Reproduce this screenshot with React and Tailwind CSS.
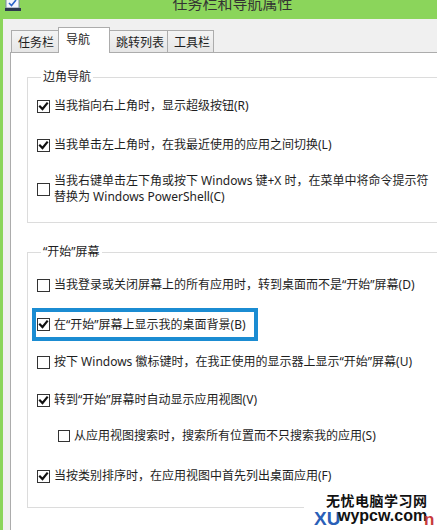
import React from 'react';

const FONT = { fontFamily: '"Noto Sans", "Noto Sans CJK SC", sans-serif' };

function Check({ checked, small }) {
  return (
    <span className={`flex-shrink-0 bg-white border border-[#333] flex items-center justify-center ${small ? 'w-[12px] h-[12px]' : 'w-[13px] h-[13px]'}`}>
      {checked && (
        <svg width="11" height="11" viewBox="0 0 11 11" fill="none" stroke="#111" strokeWidth="2.2" strokeLinecap="square">
          <path d="M2 5.5 L4.5 8 L9 2.5" />
        </svg>
      )}
    </span>
  );
}

function Row({ checked, className = '', children, small }) {
  return (
    <div className={`flex items-center gap-[4px] text-[12px] leading-[16px] text-[#1e1e1e] whitespace-nowrap ${className}`}>
      <Check checked={checked} small={small} />
      <span>{children}</span>
    </div>
  );
}

function Group({ label, className = '', children }) {
  return (
    <fieldset className={`w-[440px] border border-[#dcdcdc] pl-[9px] ${className}`}>
      <legend className="ml-[4px] px-[2px] text-[12px] leading-[16px] text-[#1e1e1e]">{label}</legend>
      {children}
    </fieldset>
  );
}

function Tab({ label, active, width, first }) {
  if (active) {
    return (
      <div className={`relative z-10 -mb-px h-[26px] bg-white border border-b-0 border-[#acacac] text-[12px] text-[#1e1e1e] pt-[3px] pl-[7px] ${width} ${first ? '' : '-ml-px'}`}>
        {label}
      </div>
    );
  }
  return (
    <div className={`h-[22px] bg-gradient-to-b from-[#f4f4f4] to-[#e6e6e6] border border-b-0 border-[#acacac] text-[12px] text-[#1e1e1e] pt-[3px] pl-[6px] ${width} ${first ? '' : '-ml-px'}`}>
      {label}
    </div>
  );
}

export default function App() {
  return (
    <div className="w-[437px] h-[530px] bg-[#8bd55b] overflow-hidden flex flex-col relative" style={FONT}>
      {/* title bar */}
      <div className="h-[19px] flex-shrink-0 relative flex justify-center pl-[28px] overflow-hidden">
        <span className="absolute left-[5px] top-0">
          <svg width="16" height="11" viewBox="0 0 16 11">
            <rect x="1" y="-2" width="13" height="10" fill="#f4f7fb" stroke="#7a8ca8" strokeWidth="1" />
            <path d="M4 3 L6.5 5.5 L11 0" fill="none" stroke="#2a64c8" strokeWidth="1.6" />
            <rect x="0" y="8" width="16" height="3" fill="#2d3a4e" />
          </svg>
        </span>
        <span className="text-[15px] leading-[19px] -mt-[6px] text-[#333]">任务栏和导航属性</span>
      </div>

      {/* body */}
      <div className="flex-1 ml-[3px] bg-[#f0f0f0] flex flex-col">
        <div className="h-[33px] flex items-end pl-[8px] flex-shrink-0">
          <Tab label="任务栏" width="w-[48px]" first />
          <Tab label="导航" width="w-[52px]" active />
          <Tab label="跳转列表" width="w-[59px]" />
          <Tab label="工具栏" width="w-[47px]" />
        </div>

        <div className="flex-1 ml-[7px] bg-white border-t border-l border-[#acacac] pl-[16px] pt-[16px]">
          <Group label="边角导航" className="pb-[17px]">
            <Row checked className="mt-[13px]">当我指向右上角时，显示超级按钮(R)</Row>
            <Row checked className="mt-[23px]">当我单击左上角时，在我最近使用的应用之间切换(L)</Row>
            <div className="mt-[20px] flex items-center gap-[4px] text-[12px] leading-[16px] text-[#1e1e1e] whitespace-nowrap">
              <Check />
              <span>
                当我右键单击左下角或按下 Windows 键+X 时，在菜单中将命令提示符
                <br />
                替换为 Windows PowerShell(C)
              </span>
            </div>
          </Group>

          <Group label="“开始”屏幕" className="mt-[21px] pb-[23px]">
            <Row className="mt-[17px]">当我登录或关闭屏幕上的所有应用时，转到桌面而不是“开始”屏幕(D)</Row>
            <div className="mt-[15px] -ml-[5px] w-[226px] h-[33px] border-4 border-[#1b8cd2] pl-[1px] flex items-center">
              <Row checked>在“开始”屏幕上显示我的桌面背景(B)</Row>
            </div>
            <Row className="mt-[13px]">按下 Windows 徽标键时，在我正使用的显示器上显示“开始”屏幕(U)</Row>
            <Row checked className="mt-[22px]">转到“开始”屏幕时自动显示应用视图(V)</Row>
            <Row small className="mt-[20px] ml-[21px]">从应用视图搜索时，搜索所有位置而不只搜索我的应用(S)</Row>
            <Row checked className="mt-[24px]">当按类别排序时，在应用视图中首先列出桌面应用(F)</Row>
          </Group>
        </div>
      </div>

      {/* watermark */}
      <div className="absolute right-0 bottom-0 w-[133px] h-[42px] bg-white">
        <div className="pl-[22px] pt-[5px] text-[14px] leading-[15px] font-bold text-[#111] tracking-[0.5px]" style={{ fontFamily: '"Noto Sans CJK SC", sans-serif' }}>
          无忧电脑学习网
        </div>
        <div className="relative h-[22px] pl-[10px]" style={{ fontFamily: '"Liberation Sans", sans-serif' }}>
          <span className="text-[19px] leading-[22px] font-bold text-[#2a5fb8]">XU</span>
          <span className="absolute left-[34px] -top-[2px] text-[16px] leading-[20px] font-bold text-[#111]">wypcw.com</span>
          <span className="absolute left-[120px] top-[3px] text-[17px] leading-[18px] font-bold text-[#c83a3a]">n</span>
        </div>
      </div>
    </div>
  );
}
